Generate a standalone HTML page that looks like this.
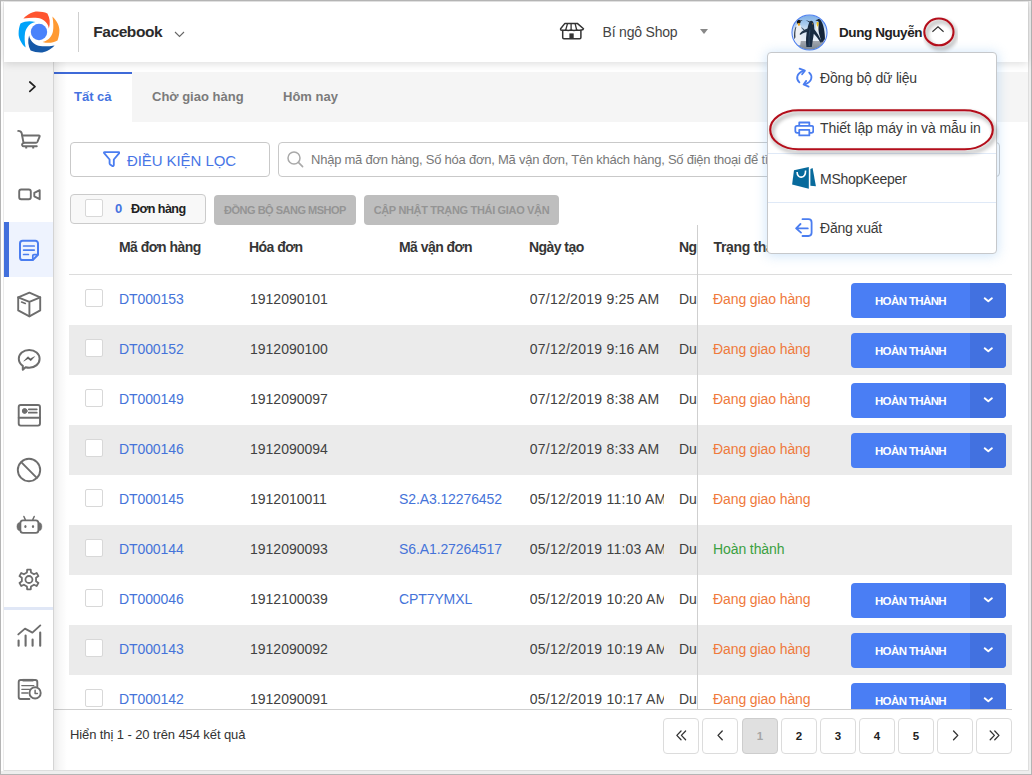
<!DOCTYPE html>
<html lang="vi">
<head>
<meta charset="utf-8">
<title>Đơn hàng</title>
<style>
*{box-sizing:border-box;margin:0;padding:0}
html,body{width:1032px;height:775px;overflow:hidden;background:#fff}
body{font-family:"Liberation Sans",sans-serif;font-size:13px;color:#333;position:relative}
.abs{position:absolute}
.t{position:absolute;white-space:nowrap;line-height:20px;height:20px}
.b{font-weight:bold}
/* outer frame */
#frame-l{left:0;top:0;width:1px;height:775px;background:#b5b5b5}
#frame-l2{left:3px;top:1px;width:1px;height:770px;background:#ebebeb}
#frame-t{left:0;top:0;width:1032px;height:1px;background:#b9b9b9}
#frame-t2{left:0;top:1px;width:1032px;height:1px;background:#e9e9e9}
#frame-b{left:0;top:774px;width:1032px;height:1px;background:#b5b5b5}
#frame-b2{left:1px;top:771px;width:1030px;height:3px;background:#eeeeee}
#frame-b3{left:4px;top:770px;width:1025px;height:1px;background:#dedede}
#frame-r{left:1031px;top:0;width:1px;height:775px;background:#b5b5b5}
#frame-r2{left:1029px;top:1px;width:2px;height:773px;background:#eeeeee}
#frame-r3{left:1028px;top:1px;width:1px;height:770px;background:#dedede}
/* header */
#header{left:4px;top:2px;width:1024px;height:60px;background:#fff;box-shadow:0 2px 8px rgba(0,0,0,.13);z-index:5}
/* sidebar */
#sidebar{left:4px;top:62px;width:50px;height:708px;background:#fff;border-right:1px solid #d4d4d4;z-index:3}
#sb-shadow{left:54px;top:62px;width:13px;height:708px;background:linear-gradient(90deg,rgba(0,0,0,.075),rgba(0,0,0,.03) 45%,rgba(0,0,0,0));z-index:3}
#expand{left:0;top:0;width:49px;height:50px;background:#f2f2f2}
#active{left:0;top:160px;width:49px;height:55px;background:#eef3fe}
#active i{position:absolute;left:0;top:0;width:5px;height:55px;background:#4270dc}
.ico{position:absolute;left:11px;width:28px;height:28px}
.ico svg{width:28px;height:28px;display:block}
#sb-div{left:0;top:545px;width:49px;height:2.6px;background:#e0e7f6}
/* tabs */
#tabbar{left:54px;top:72px;width:974px;height:50px;background:#f5f5f5}
#tab-a{left:54px;top:72px;width:78px;height:50px;background:#fff;border-top:2px solid #3f6ad8}
.tab{font-size:13px;font-weight:bold;color:#7b7b7b}
/* filter */
#filterbtn{left:70px;top:142px;width:200px;height:35px;border:1px solid #c9c9c9;border-radius:4px;background:#fff}
#search{left:278px;top:142px;width:722px;height:35px;border:1px solid #c9c9c9;border-radius:4px;background:#fff}
#cnt{left:70px;top:194px;width:136px;height:30px;border:1px solid #cbcbcb;border-radius:4px;background:#f8f8f8}
.cb{position:absolute;width:18px;height:18px;border:1px solid #d8d8d8;border-radius:2px;background:#fff}
.gbtn{position:absolute;top:195px;height:30px;background:#bebebe;border-radius:4px;color:#949494;font-size:11px;font-weight:bold;text-align:center;line-height:31px;white-space:nowrap}
/* table */
.th{font-weight:bold;color:#363636;font-size:14px;letter-spacing:-.55px}
.row{position:absolute;left:15px;width:943px;height:50px}
.row.g{background:#ebebeb}
.row .t{top:14px;font-size:14px;letter-spacing:-.1px;color:#414141}
.row .dt{letter-spacing:.25px;max-width:134.3px;overflow:hidden}
.row .lnk{color:#4573d9}
.row .or{color:#ef7a3c}
.row .gr{color:#3aa040}
.btn{position:absolute;left:782px;top:8px;width:155px;height:35px;border-radius:4px;background:#4a7ef4;overflow:hidden}
.btn span{position:absolute;left:0;top:0;width:119px;height:35px;line-height:37px;text-align:center;color:#fff;font-weight:bold;font-size:11.5px;letter-spacing:-.62px}
.btn i{position:absolute;left:119px;top:0;width:36px;height:35px;background:#4271e0}
.btn svg{position:absolute;left:131px;top:12px;width:12px;height:10px}
#vline{left:697px;top:225px;width:1px;height:484px;background:#cfcfcf;z-index:2}
#clip{left:54px;top:224px;width:974px;height:485px;overflow:hidden}
/* footer */
#fline{left:54px;top:709px;width:958px;height:1px;background:#cfcfcf}
.pg{position:absolute;top:718px;width:36px;height:36px;border:1px solid #dcdcdc;border-radius:4px;background:#fff;text-align:center;line-height:35px;font-weight:bold;font-size:11.5px;color:#222}
.pg.cur{background:#e0e0e0;color:#a6a6a6;border-color:#cdcdcd}
.pg svg{position:absolute;left:10.6px;top:10.1px;width:12.8px;height:12.8px}
/* dropdown */
#menu{left:767px;top:52px;width:230px;height:202px;background:#fff;border-radius:4px;border:1px solid #c6c8cb;box-shadow:0 1px 12px 1px rgba(110,175,235,.32);z-index:10}
#menu .sep{position:absolute;left:0;width:228px;height:1px;background:#dfe9f7}
#menu .t{font-size:14px;color:#3a3a3a;left:52px}
</style>
</head>
<body>
<!-- content placeholders -->
<div class="abs" id="tabbar"></div>
<div class="abs" id="tab-a"></div>
<div class="t tab" style="left:74px;top:87px;color:#4573e0">Tất cả</div>
<div class="t tab" style="left:152px;top:87px">Chờ giao hàng</div>
<div class="t tab" style="left:283px;top:87px">Hôm nay</div>

<div class="abs" id="filterbtn">
<svg class="abs" style="left:31.7px;top:8px" width="17.4" height="16.4" viewBox="0 0 18 17"><path d="M1.6 1.2H16.4C17 1.2 17.2 1.7 16.8 2.2L11.2 8.8V14.6C11.2 15.6 10.4 16 9.6 15.5L7.4 14C7 13.7 6.8 13.4 6.8 12.8V8.8L1.2 2.2C0.8 1.7 1 1.2 1.6 1.2Z" fill="none" stroke="#4a7df0" stroke-width="1.9" stroke-linejoin="round"/></svg>
<div class="t" style="left:56px;top:7.5px;font-size:15px;letter-spacing:-.08px;color:#4876e6">ĐIỀU KIỆN LỌC</div>
</div>
<div class="abs" id="search">
<svg class="abs" style="left:7px;top:7px" width="20" height="20" viewBox="0 0 20 20"><circle cx="8" cy="8" r="6" fill="none" stroke="#a9a9a9" stroke-width="1.5"/><path d="M12.4 12.4L16.6 16.6" stroke="#a9a9a9" stroke-width="1.6" stroke-linecap="round"/></svg>
<div class="t" style="left:32px;top:7px;font-size:13px;letter-spacing:-.24px;color:#787878">Nhập mã đơn hàng, Số hóa đơn, Mã vận đơn, Tên khách hàng, Số điện thoại để tìm kiếm</div>
</div>
<div class="abs" id="cnt"><div class="cb" style="left:14px;top:4px"></div>
<div class="t b" style="left:44px;top:4px;font-size:13px;color:#4573e0">0</div>
<div class="t b" style="left:60px;top:4px;font-size:12.6px;letter-spacing:-.6px;color:#222">Đơn hàng</div></div>
<div class="gbtn" style="left:214px;width:142px;letter-spacing:-.5px">ĐỒNG BỘ SANG MSHOP</div>
<div class="gbtn" style="left:364px;width:195px;letter-spacing:-.33px">CẬP NHẬT TRẠNG THÁI GIAO VẬN</div>


<div class="abs" id="clip">
<div class="t th" style="left:65px;top:13.4px">Mã đơn hàng</div>
<div class="t th" style="left:195px;top:13.4px">Hóa đơn</div>
<div class="t th" style="left:345px;top:13.4px">Mã vận đơn</div>
<div class="t th" style="left:475px;top:13.4px">Ngày tạo</div>
<div class="t th" style="left:625px;top:13.4px;width:18px;overflow:hidden">Người tạo</div>
<div class="t th" style="left:659.6px;top:13.4px;letter-spacing:-.35px">Trạng thái</div>
<div class="abs" style="left:15px;top:50px;width:943px;height:1px;background:#dcdcdc"></div>
<div class="row" style="top:51px"><div class="cb" style="left:16px;top:14px"></div><div class="t lnk" style="left:50px">DT000153</div><div class="t" style="left:181px;letter-spacing:0">1912090101</div><div class="t dt" style="left:460.7px">07/12/2019 9:25 AM</div><div class="t" style="left:610px;width:17.5px;overflow:hidden">Dung Nguyễn</div><div class="t or" style="left:644px">Đang giao hàng</div><div class="btn"><span>HOÀN THÀNH</span><i></i><svg viewBox="0 0 12 10"><path d="M2.7 3.3L6.3 6.3L9.9 3.3" fill="none" stroke="#fff" stroke-width="1.9" stroke-linecap="round" stroke-linejoin="round"/></svg></div></div>
<div class="row g" style="top:101px"><div class="cb" style="left:16px;top:14px"></div><div class="t lnk" style="left:50px">DT000152</div><div class="t" style="left:181px;letter-spacing:0">1912090100</div><div class="t dt" style="left:460.7px">07/12/2019 9:16 AM</div><div class="t" style="left:610px;width:17.5px;overflow:hidden">Dung Nguyễn</div><div class="t or" style="left:644px">Đang giao hàng</div><div class="btn"><span>HOÀN THÀNH</span><i></i><svg viewBox="0 0 12 10"><path d="M2.7 3.3L6.3 6.3L9.9 3.3" fill="none" stroke="#fff" stroke-width="1.9" stroke-linecap="round" stroke-linejoin="round"/></svg></div></div>
<div class="row" style="top:151px"><div class="cb" style="left:16px;top:14px"></div><div class="t lnk" style="left:50px">DT000149</div><div class="t" style="left:181px;letter-spacing:0">1912090097</div><div class="t dt" style="left:460.7px">07/12/2019 8:38 AM</div><div class="t" style="left:610px;width:17.5px;overflow:hidden">Dung Nguyễn</div><div class="t or" style="left:644px">Đang giao hàng</div><div class="btn"><span>HOÀN THÀNH</span><i></i><svg viewBox="0 0 12 10"><path d="M2.7 3.3L6.3 6.3L9.9 3.3" fill="none" stroke="#fff" stroke-width="1.9" stroke-linecap="round" stroke-linejoin="round"/></svg></div></div>
<div class="row g" style="top:201px"><div class="cb" style="left:16px;top:14px"></div><div class="t lnk" style="left:50px">DT000146</div><div class="t" style="left:181px;letter-spacing:0">1912090094</div><div class="t dt" style="left:460.7px">07/12/2019 8:33 AM</div><div class="t" style="left:610px;width:17.5px;overflow:hidden">Dung Nguyễn</div><div class="t or" style="left:644px">Đang giao hàng</div><div class="btn"><span>HOÀN THÀNH</span><i></i><svg viewBox="0 0 12 10"><path d="M2.7 3.3L6.3 6.3L9.9 3.3" fill="none" stroke="#fff" stroke-width="1.9" stroke-linecap="round" stroke-linejoin="round"/></svg></div></div>
<div class="row" style="top:251px"><div class="cb" style="left:16px;top:14px"></div><div class="t lnk" style="left:50px">DT000145</div><div class="t" style="left:181px;letter-spacing:0">1912010011</div><div class="t lnk" style="left:330px">S2.A3.12276452</div><div class="t dt" style="left:460.7px">05/12/2019 11:10 AM</div><div class="t" style="left:610px;width:17.5px;overflow:hidden">Dung Nguyễn</div><div class="t or" style="left:644px">Đang giao hàng</div></div>
<div class="row g" style="top:301px"><div class="cb" style="left:16px;top:14px"></div><div class="t lnk" style="left:50px">DT000144</div><div class="t" style="left:181px;letter-spacing:0">1912090093</div><div class="t lnk" style="left:330px">S6.A1.27264517</div><div class="t dt" style="left:460.7px">05/12/2019 11:03 AM</div><div class="t" style="left:610px;width:17.5px;overflow:hidden">Dung Nguyễn</div><div class="t gr" style="left:644px">Hoàn thành</div></div>
<div class="row" style="top:351px"><div class="cb" style="left:16px;top:14px"></div><div class="t lnk" style="left:50px">DT000046</div><div class="t" style="left:181px;letter-spacing:0">1912100039</div><div class="t lnk" style="left:330px">CPT7YMXL</div><div class="t dt" style="left:460.7px">05/12/2019 10:20 AM</div><div class="t" style="left:610px;width:17.5px;overflow:hidden">Dung Nguyễn</div><div class="t or" style="left:644px">Đang giao hàng</div><div class="btn"><span>HOÀN THÀNH</span><i></i><svg viewBox="0 0 12 10"><path d="M2.7 3.3L6.3 6.3L9.9 3.3" fill="none" stroke="#fff" stroke-width="1.9" stroke-linecap="round" stroke-linejoin="round"/></svg></div></div>
<div class="row g" style="top:401px"><div class="cb" style="left:16px;top:14px"></div><div class="t lnk" style="left:50px">DT000143</div><div class="t" style="left:181px;letter-spacing:0">1912090092</div><div class="t dt" style="left:460.7px">05/12/2019 10:19 AM</div><div class="t" style="left:610px;width:17.5px;overflow:hidden">Dung Nguyễn</div><div class="t or" style="left:644px">Đang giao hàng</div><div class="btn"><span>HOÀN THÀNH</span><i></i><svg viewBox="0 0 12 10"><path d="M2.7 3.3L6.3 6.3L9.9 3.3" fill="none" stroke="#fff" stroke-width="1.9" stroke-linecap="round" stroke-linejoin="round"/></svg></div></div>
<div class="row" style="top:451px"><div class="cb" style="left:16px;top:14px"></div><div class="t lnk" style="left:50px">DT000142</div><div class="t" style="left:181px;letter-spacing:0">1912090091</div><div class="t dt" style="left:460.7px">05/12/2019 10:17 AM</div><div class="t" style="left:610px;width:17.5px;overflow:hidden">Dung Nguyễn</div><div class="t or" style="left:644px">Đang giao hàng</div><div class="btn"><span>HOÀN THÀNH</span><i></i><svg viewBox="0 0 12 10"><path d="M2.7 3.3L6.3 6.3L9.9 3.3" fill="none" stroke="#fff" stroke-width="1.9" stroke-linecap="round" stroke-linejoin="round"/></svg></div></div>
</div>
<div class="abs" id="vline"></div>
<div class="abs" id="fline"></div>
<div class="t" style="left:70px;top:725px;font-size:13px;letter-spacing:-.1px;color:#333">Hiển thị 1 - 20 trên 454 kết quả</div>
<div class="pg" style="left:663px"><svg viewBox="0 0 14 14"><path d="M6.6 2.2L2 7L6.6 11.8M11.6 2.2L7 7L11.6 11.8" fill="none" stroke="#333" stroke-width="1.4" stroke-linecap="round" stroke-linejoin="round"/></svg></div>
<div class="pg" style="left:702px"><svg viewBox="0 0 14 14"><path d="M9 2.2L4.4 7L9 11.8" fill="none" stroke="#333" stroke-width="1.5" stroke-linecap="round" stroke-linejoin="round"/></svg></div>
<div class="pg cur" style="left:742px">1</div>
<div class="pg" style="left:781px">2</div>
<div class="pg" style="left:820px">3</div>
<div class="pg" style="left:859px">4</div>
<div class="pg" style="left:898px">5</div>
<div class="pg" style="left:937px"><svg viewBox="0 0 14 14"><path d="M5 2.2L9.6 7L5 11.8" fill="none" stroke="#333" stroke-width="1.5" stroke-linecap="round" stroke-linejoin="round"/></svg></div>
<div class="pg" style="left:976px"><svg viewBox="0 0 14 14"><path d="M2.4 2.2L7 7L2.4 11.8M7.4 2.2L12 7L7.4 11.8" fill="none" stroke="#333" stroke-width="1.4" stroke-linecap="round" stroke-linejoin="round"/></svg></div>
<div class="abs" id="header">
<svg class="abs" style="left:14px;top:9px" width="42" height="42" viewBox="-21 -21 42 42">
<g id="bl"><path d="M-15.6,-13.4C-11,-18.2 -6,-20.4 -1.7,-20.4C2,-20.4 5.5,-19.7 8.4,-18.5C10.9,-14 11.5,-9 9.9,-3.6C9.2,-7 7.5,-9.8 5,-11.4C3,-12.9 1,-13.7 -1,-14C-5,-14.6 -10,-14.4 -15.6,-13.4Z" fill="#ff5530"/></g>
<path transform="rotate(90)" d="M-15.6,-13.4C-11,-18.2 -6,-20.4 -1.7,-20.4C2,-20.4 5.5,-19.7 8.4,-18.5C10.9,-14 11.5,-9 9.9,-3.6C9.2,-7 7.5,-9.8 5,-11.4C3,-12.9 1,-13.7 -1,-14C-5,-14.6 -10,-14.4 -15.6,-13.4Z" fill="#ff9a33"/>
<path transform="rotate(180)" d="M-15.6,-13.4C-11,-18.2 -6,-20.4 -1.7,-20.4C2,-20.4 5.5,-19.7 8.4,-18.5C10.9,-14 11.5,-9 9.9,-3.6C9.2,-7 7.5,-9.8 5,-11.4C3,-12.9 1,-13.7 -1,-14C-5,-14.6 -10,-14.4 -15.6,-13.4Z" fill="#1659a8"/>
<path transform="rotate(270)" d="M-15.6,-13.4C-11,-18.2 -6,-20.4 -1.7,-20.4C2,-20.4 5.5,-19.7 8.4,-18.5C10.9,-14 11.5,-9 9.9,-3.6C9.2,-7 7.5,-9.8 5,-11.4C3,-12.9 1,-13.7 -1,-14C-5,-14.6 -10,-14.4 -15.6,-13.4Z" fill="#00a3fa"/>
<circle cx="0" cy="0" r="8.2" fill="#4b83fb"/>
</svg>
<div class="abs" style="left:74px;top:10px;width:1px;height:40px;background:#cfcfcf"></div>
<div class="t b" style="left:89.3px;top:20px;font-size:15.5px;letter-spacing:-.44px;color:#2b2b2b">Facebook</div>
<svg class="abs" style="left:170px;top:29px" width="11" height="7" viewBox="0 0 11 7"><path d="M1 1L5.5 5.5L10 1" fill="none" stroke="#666" stroke-width="1.1"/></svg>

<svg class="abs" style="left:555px;top:20px" width="26" height="19" viewBox="559 22 26 19" fill="none" stroke="#333" stroke-width="1.5" stroke-linejoin="round" stroke-linecap="round">
<path d="M564.9 23.4H577.3L583.5 28.7Q583.3 30.2 581.2 30.1Q579 30.6 576.9 30.1Q574 30.7 571.1 30.1Q568.2 30.7 565.5 30.1Q563.2 30.6 561 30.1Q560.4 29.6 560.6 28.7Z" fill="#fff"/>
<path d="M567.5 23.6L565.7 30M571.1 23.6V30M575.1 23.6L576.7 30" stroke-width="1.3"/>
<path d="M562.7 30.6V37.5Q562.7 38.7 563.9 38.7H579.7Q580.9 38.7 580.9 37.5V30.6"/>
<rect x="569.4" y="33.4" width="4.3" height="5.3" fill="#333" stroke="none"/>
</svg>
<div class="t" style="left:598.6px;top:20px;font-size:14px;letter-spacing:-.2px;color:#444">Bí ngô Shop</div>
<svg class="abs" style="left:696px;top:27px" width="8" height="5" viewBox="0 0 8 5"><path d="M0 0H8L4 5Z" fill="#888"/></svg>

<svg class="abs" style="left:786.5px;top:11.5px" width="37" height="37" viewBox="0 0 38 38">
<defs><clipPath id="av"><circle cx="19" cy="19" r="17.7"/></clipPath>
<linearGradient id="sky" x1="0" y1="0" x2="0" y2="1"><stop offset="0" stop-color="#6ea6e4"/><stop offset=".3" stop-color="#a9cbee"/><stop offset=".45" stop-color="#dbe7f5"/><stop offset=".7" stop-color="#e9eff7"/><stop offset=".71" stop-color="#a4a9b0"/><stop offset="1" stop-color="#6f757c"/></linearGradient>
<filter id="bl" x="-5%" y="-5%" width="110%" height="110%"><feGaussianBlur stdDeviation=".45"/></filter></defs>
<g clip-path="url(#av)"><g filter="url(#bl)">
<rect x="-2" y="-2" width="42" height="42" fill="url(#sky)"/>
<!-- left penguin -->
<path d="M6.2 11C7.4 10 9.4 10.4 10 12C11 15 10.8 22 10.2 27L9.4 32H4.6C3.4 26 3.4 18 4.8 13Z" fill="#eef1f5"/>
<path d="M4.8 13C3.4 16 2.6 21 3.4 26L4.6 24C4.2 20 4.6 16 5.6 13Z" fill="#39424d"/>
<path d="M6.4 6.6C7.4 5.6 9 5.8 9.6 6.6L12 6.1L9.8 7.8C10 9 9.6 9.6 8.8 10H6.6C5.8 9 5.8 7.6 6.4 6.6Z" fill="#15181d"/>
<path d="M6.8 9.4C7.6 9 8.8 9.2 9.4 10C9.4 11.4 8.8 12 8 12.2C7.2 11.6 6.8 10.6 6.8 9.4Z" fill="#f0a51e"/>
<!-- centre penguin flipper to the left -->
<path d="M17.6 14.6C14 16 10.6 17.6 9 20.4C8.8 21.2 9.4 21.6 10 21.2C12.4 19.2 15 18.6 17 18.4Z" fill="#22354a"/>
<path d="M10.8 13.6C12 14.4 13.2 15.4 14 16.2L12.6 16.8C12 15.8 11.2 14.8 10.6 14.2Z" fill="#3b4d60"/>
<!-- right penguin -->
<path d="M25.6 11C26 9.4 27.4 9 28.4 9.6L29 16L27 17.4C25.8 15.6 25.4 13 25.6 11Z" fill="#f5f3e4"/>
<path d="M26.4 8.6C27 8 28.2 8 28.6 8.8C28.6 10.6 28 12.4 27 13C26.4 11.6 26.2 10 26.4 8.6Z" fill="#f2c21e"/>
<path d="M25 6.5L27.4 5.6C28.2 4.8 29.6 5 30.2 6C31.8 8 33 11 33.8 15C34.6 19 35 23 34.8 26L31.6 29.4C30.2 25 28.4 20.6 28.2 16C28.2 13 28.6 10 28.6 8.6C28.4 7.6 27.6 7.2 27 7.2Z" fill="#142338"/>
<!-- centre penguin -->
<path d="M15.2 6.2L19.2 7.6C20 6.8 21.6 6.8 22.4 7.8C23.4 9.4 23.8 12 24 15.6C26.4 18.6 29 23 31.8 28.2L30.4 29.6C28 25.6 25.6 22.6 23.4 20.4C22.8 25 21.8 30 21.4 34H15.8C15 28 15.4 21 17 15C17.4 12.4 18 10.4 18.8 8.8Z" fill="#182a40"/>
<path d="M21.8 9.6C22.4 9.4 22.8 10 22.6 10.6L22 10.8Z" fill="#e88b1e"/>
<path d="M19.4 16C18.4 21 18.2 27 18.8 33" fill="none" stroke="#2c4560" stroke-width="1.2"/>
</g></g>
<circle cx="19" cy="19" r="18" fill="none" stroke="#4a7df0" stroke-width="1.1"/>
</svg>
<div class="t b" style="left:835px;top:21px;font-size:13.5px;letter-spacing:-.42px;color:#222">Dung Nguyễn</div>
<svg class="abs" style="left:927px;top:23px" width="14" height="9" viewBox="0 0 14 9"><path d="M1.4 6.7L7 1.7L12.6 6.7" fill="none" stroke="#333" stroke-width="1.15"/></svg>
</div>
<div class="abs" id="sidebar"><div class="abs" id="expand"></div><div class="abs" id="active"><i></i></div><div class="abs" id="sb-div"></div>
<svg class="abs" style="left:0;top:0" width="50" height="708" viewBox="4 62 50 708" fill="none" stroke="#6d6d6d" stroke-width="1.9" stroke-linecap="round" stroke-linejoin="round">
<path d="M29.8 82L35 86.7L29.8 91.4" stroke="#222" stroke-width="1.7"/>
<!-- cart -->
<path d="M18.2 130.9C20.4 130.9 21.3 131.4 21.7 133.2L23.6 143.2C22.2 143.6 21.8 144.4 22.2 145.3C22.5 146 23 146.3 23.8 146.3H36.8"/>
<path d="M22.4 135.5H38.8C39.6 135.5 39.9 136 39.6 136.7L37.4 141.8C37.1 142.4 36.7 142.7 36 142.7H23.6"/>
<path d="M26.2 146.6V148.4M33.2 146.6V148.4" stroke-width="2" stroke-linecap="butt"/>
<!-- video -->
<rect x="19.2" y="189.5" width="11.6" height="9.8" rx="2"/>
<path d="M34.3 192.9L39.7 190.2V199.2L34.3 196.3Z"/>
<!-- orders (active) -->
<g stroke="#4a7df0" stroke-width="2">
<path d="M22.6 240.8H35.2A2.6 2.6 0 0 1 38 243.4V254.8L32.8 260H22.6A2.6 2.6 0 0 1 20 257.4V243.4A2.6 2.6 0 0 1 22.6 240.8Z"/>
<path d="M37.6 254.6H34A1.2 1.2 0 0 0 32.8 255.8V259.8" stroke-width="1.7"/>
<path d="M23.6 246H34.2M23.6 250.1H34.2M23.6 254.5H28.4" stroke-width="1.7"/>
</g>
<!-- box -->
<path d="M29.4 292.7L40.2 297.3V310.4L29.4 316.3L18.2 310.4V297.3Z" stroke-width="1.9"/>
<path d="M18.2 297.3L29.4 301.9L40.2 297.3M29.4 301.9V316.3" stroke-width="1.9"/><path d="M21.6 302L25.3 303.5" stroke-width="1.6"/>
<!-- messenger -->
<path d="M29.2 350C35.1 350 39.6 353.8 39.6 358.8C39.6 363.8 35.1 367.7 29.2 367.7C27.9 367.7 26.7 367.5 25.6 367.2L22.8 369.8V365.8C20.3 364.2 18.8 361.7 18.8 358.8C18.8 353.8 23.3 350 29.2 350Z" stroke-width="2"/>
<path d="M24 360.9L27.9 356.7L30.4 358.8L34.6 356.6L30.8 360.8L28.2 358.7Z" fill="#555" stroke="#555" stroke-width=".5"/>
<!-- news -->
<rect x="18.7" y="405" width="21.3" height="20.6" rx="2"/>
<path d="M18.7 417.8H40"/>
<circle cx="24.7" cy="411" r="2.4" fill="#6d6d6d" stroke-width="1"/>
<path d="M28.8 409.3H36.8M28.8 412.7H36.8" stroke-width="1.7"/>
<!-- ban -->
<circle cx="29" cy="470" r="11.2"/>
<path d="M21.2 462.2L36.8 477.8"/>
<!-- robot -->
<rect x="20.4" y="520.3" width="18" height="12.6" rx="2.6" stroke-width="1.8"/>
<path d="M23.9 516.5L25.3 519.6M34.2 516.5L32.8 519.6" stroke-width="1.5"/>
<path d="M20 522.4A3.1 4.2 0 0 0 20 530.8Z" fill="#6f6f6f" stroke-width=".4"/>
<path d="M38.8 522.4A3.1 4.2 0 0 1 38.8 530.8Z" fill="#6f6f6f" stroke-width=".4"/>
<ellipse cx="25.4" cy="526.6" rx="1.1" ry="1.5" fill="#6f6f6f" stroke="none"/><ellipse cx="33" cy="526.6" rx="1.1" ry="1.5" fill="#6f6f6f" stroke="none"/>
<!-- gear -->
<path d="M26.91 572.49 L27.16 569.56 L30.74 569.56 L30.99 572.49 L34.00 574.23 L36.66 572.98 L38.45 576.08 L36.04 577.76 L36.04 581.24 L38.45 582.92 L36.66 586.02 L34.00 584.77 L30.99 586.51 L30.74 589.44 L27.16 589.44 L26.91 586.51 L23.90 584.77 L21.24 586.02 L19.45 582.92 L21.86 581.24 L21.86 577.76 L19.45 576.08 L21.24 572.98 L23.90 574.23Z" stroke-width="1.8"/>
<circle cx="28.95" cy="579.5" r="3.5" stroke-width="1.8"/>
<!-- chart -->
<path d="M18.3 634.4L25 628.6L32.4 632.6L40.3 625.4"/>
<path d="M18.6 640.6V645.8M25.6 635.6V645.8M32.6 639.6V645.8M40.2 632.6V645.8" stroke-width="2.1"/>
<!-- clock doc -->
<path d="M29.4 699H20.7A2 2 0 0 1 18.7 697V682A2 2 0 0 1 20.7 680H35.3A2 2 0 0 1 37.3 682V686.6"/>
<path d="M22.6 680.2H33.4" stroke-width="2.6" stroke-linecap="butt"/>
<path d="M21.8 685.6H33.8M21.8 689.3H29.6M21.8 693H28" stroke-width="1.3"/>
<circle cx="35.1" cy="692.9" r="5.6" fill="#fff"/>
<path d="M35.1 690.2V693.5H37.4" stroke-width="1.5"/>
</svg></div>
<div class="abs" id="sb-shadow"></div>

<div class="abs" id="menu">
<div class="sep" style="top:100px"></div><div class="sep" style="top:149px"></div>
<!-- sync -->
<svg class="abs" style="left:26px;top:14px" width="20" height="22" viewBox="0 0 20 22" fill="none" stroke="#4a7df0" stroke-width="1.8" stroke-linecap="round" stroke-linejoin="round">
<path d="M5.4 15.4C1.6 12 2.4 6.4 9.6 3.6"/><path d="M5.6 1.7L10.9 3.6L8.1 7.2"/>
<path d="M15.2 5.6C19 9 18.2 14.6 11 17.4"/><path d="M12.2 13.9L9.6 17.5L14.6 19.6"/>
</svg>
<div class="t" style="top:15px;letter-spacing:-.18px">Đồng bộ dữ liệu</div>
<!-- printer -->
<svg class="abs" style="left:25.6px;top:68px" width="20.6" height="15.9" viewBox="0 0 22 17" fill="none" stroke="#4a7df0" stroke-width="1.9" stroke-linejoin="round">
<path d="M5.6 5V1.6H16.4V5"/>
<path d="M5.4 12.6H3.2C2 12.6 1.4 12 1.4 10.8V7C1.4 5.8 2 5.2 3.2 5.2H18.8C20 5.2 20.6 5.8 20.6 7V10.8C20.6 12 20 12.6 18.8 12.6H16.6"/>
<path d="M5.6 9.6H16.4V15.4H5.6Z"/>
</svg>
<div class="t" style="top:65px;letter-spacing:-.1px">Thiết lập máy in và mẫu in</div>
<!-- mshopkeeper -->
<svg class="abs" style="left:23px;top:113px" width="26" height="24" viewBox="0 0 26 24">
<path d="M3 4.2L17.8 1V22.7L1.1 18.6Z" fill="#076a9c"/>
<path d="M19.4 3L21.6 2.1L24.9 20.2L19.4 19.7Z" fill="#076a9c"/>
<path d="M6.1 6C6.1 13.4 14.6 12.8 14.6 4.4" fill="none" stroke="#fff" stroke-width="1.6"/>
</svg>
<div class="t" style="top:116px;letter-spacing:-.27px">MShopKeeper</div>
<!-- logout -->
<svg class="abs" style="left:26px;top:163px" width="22" height="24" viewBox="794 216 22 24" fill="none" stroke="#4a7df0" stroke-width="1.8" stroke-linecap="round" stroke-linejoin="round">
<path d="M802.5 219.2H808.4Q811.6 219.2 811.6 222.4V232.8Q811.6 236 808.4 236H802.5"/>
<path d="M807.8 228.4H796.6M800.5 224L796.1 228.4L801 232.6"/>
</svg>
<div class="t" style="top:165px;letter-spacing:-.2px">Đăng xuất</div>
</div>
<!-- annotations -->
<svg class="abs" style="left:755px;top:5px;z-index:11" width="260" height="160" viewBox="755 5 260 160" fill="none">
<defs><filter id="ds" x="-10%" y="-20%" width="125%" height="150%"><feGaussianBlur in="SourceAlpha" stdDeviation="1.9"/><feOffset dx="2.2" dy="2.8"/><feComponentTransfer><feFuncA type="linear" slope=".48"/></feComponentTransfer><feMerge><feMergeNode/><feMergeNode in="SourceGraphic"/></feMerge></filter></defs>
<rect x="770.2" y="110.2" width="222.6" height="39" rx="28" ry="19.5" stroke="#b3111a" stroke-width="2.1" filter="url(#ds)"/>
<ellipse cx="938.9" cy="31.9" rx="14.6" ry="13.4" stroke="#b3111a" stroke-width="2.1" filter="url(#ds)"/>
</svg>
<div class="abs" id="frame-t2"></div>
<div class="abs" id="frame-l2"></div>
<div class="abs" id="frame-b3"></div>
<div class="abs" id="frame-r3"></div>
<div class="abs" id="frame-b2"></div>
<div class="abs" id="frame-r2"></div>
<div class="abs" id="frame-t"></div>
<div class="abs" id="frame-l"></div>
<div class="abs" id="frame-b"></div>
<div class="abs" id="frame-r"></div>
</body>
</html>
